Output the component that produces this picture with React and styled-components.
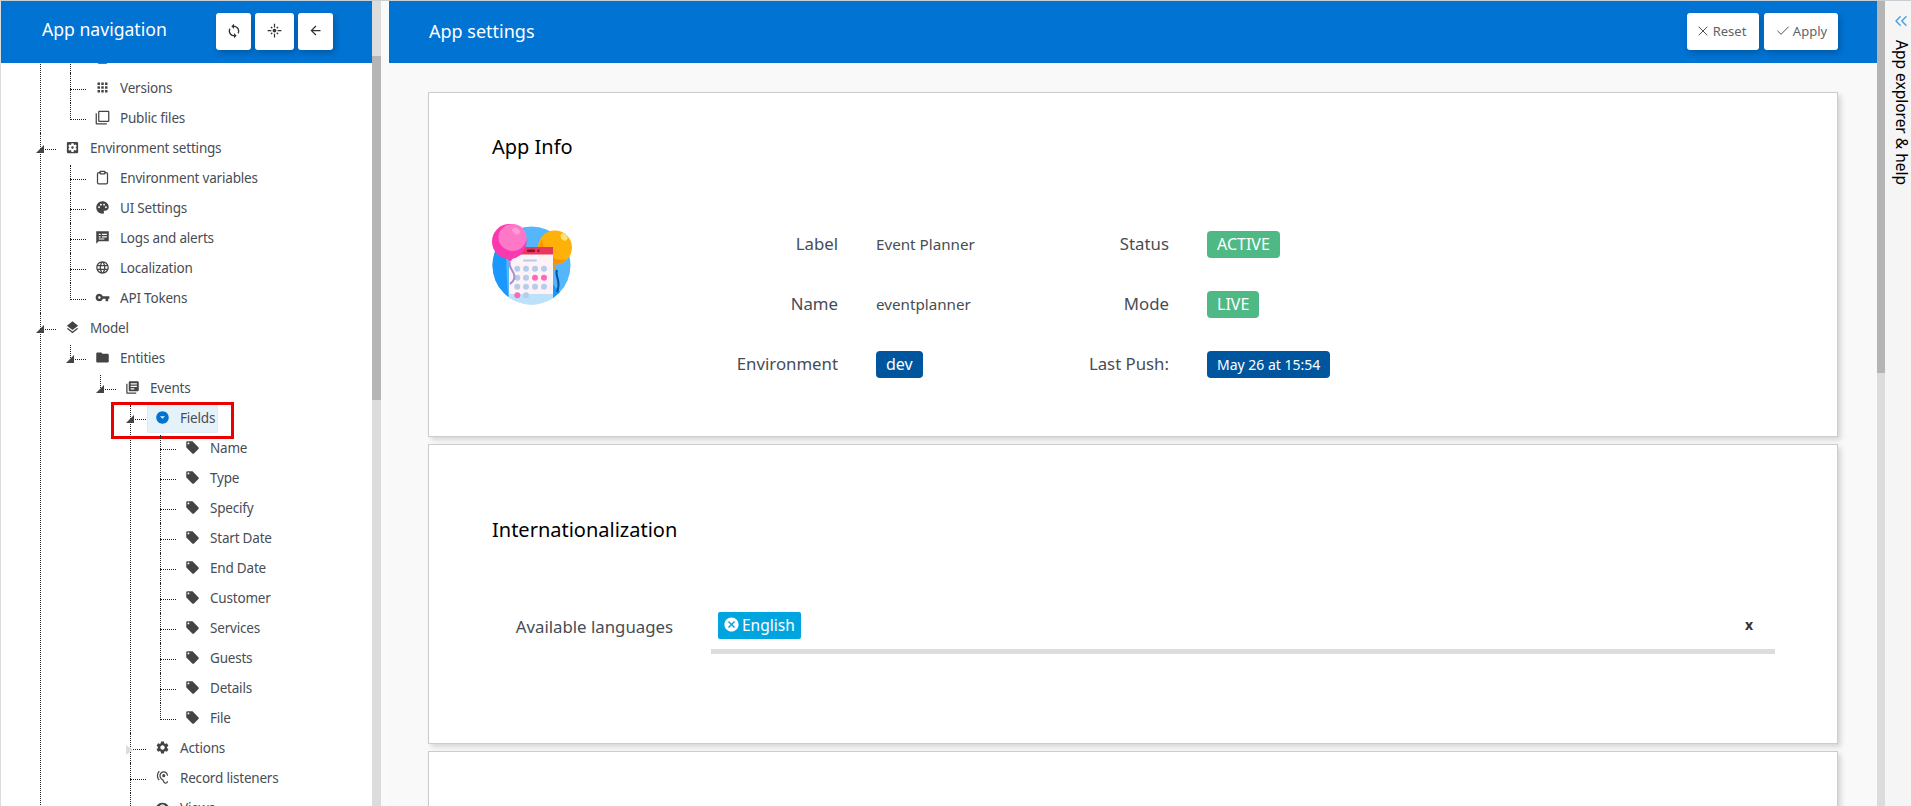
import React from 'react';
import styled, { createGlobalStyle } from 'styled-components';
import {
  MdApps, MdFilterNone, MdSettingsApplications, MdPalette,
  MdLanguage, MdVpnKey, MdLayers, MdFolder, MdLibraryBooks,
  MdArrowDropDownCircle, MdLocalOffer, MdSettings, MdHearing, MdVisibility,
  MdSync, MdFlare, MdArrowBack, MdOutlineDescription, MdCancel,
} from 'react-icons/md';
import { X, Check, ChevronsLeft, Clipboard } from 'lucide-react';

const Global = createGlobalStyle`
  html, body, #root { margin: 0; height: 100%; }
  body {
    font-family: "Noto Sans", "Open Sans", sans-serif;
    background: #fff;
    overflow: hidden;
  }
  * { box-sizing: border-box; }
`;

const AppFrame = styled.div`
  height: 806px;
  display: grid;
  grid-template-columns: 371px 9px 8px 1fr 8px 26px;
  border-top: 1px solid #c9ced3;
  border-left: 1px solid #dcdcdc;
  overflow: hidden;
`;

const Pane = styled.div`
  display: grid;
  grid-template-rows: 62px 1fr;
  min-height: 0;
  overflow: hidden;
  background: ${p => p.$bg || '#fff'};
`;

const PaneHeader = styled.header`
  background: #0073d3;
  color: #fff;
  display: flex;
  align-items: center;
  justify-content: space-between;
  padding: ${p => p.$pad};
`;

const NavTitle = styled.h2`
  margin: 0 0 6px;
  font-size: 17.6px;
  font-weight: 400;
`;

const MainTitle = styled.h2`
  margin: 0 0 2px;
  font-size: 18px;
  font-weight: 400;
`;

const ButtonRow = styled.div`
  display: flex;
  gap: ${p => p.$gap}px;
`;

const HeaderButton = styled.button`
  height: 37px;
  width: ${p => p.$w}px;
  margin-bottom: 1px;
  display: flex;
  align-items: center;
  justify-content: center;
  gap: 2px;
  padding: 0 ${p => p.$right || 0}px 2px 0;
  border: 0;
  border-radius: 3px;
  background: #fff;
  color: #5f6368;
  font: 400 13px "Noto Sans", sans-serif;
  box-shadow: 2px 3px 6px rgba(0, 0, 0, 0.22);
  svg { color: #333; }
`;

const TreeScroll = styled.div`
  overflow: hidden;
  min-height: 0;
`;

const TreeRoot = styled.ul`
  list-style: none;
  margin: -20px 0 0;
  padding: 0 0 0 39px;
`;

const TreeList = styled.ul`
  list-style: none;
  margin: 0 0 0 30px;
  padding: 0;
`;

const TreeItem = styled.li`
  position: relative;
  &::before {
    content: '';
    position: absolute;
    left: 0;
    top: ${p => (p.$first ? 2 : 0)}px;
    height: ${p => (p.$last ? '15px' : 'auto')};
    bottom: ${p => (p.$last ? 'auto' : 0)};
    border-left: 1px dotted #222;
  }
`;

const TreeRow = styled.div`
  position: relative;
  height: 30px;
  display: flex;
  align-items: center;
  &::before {
    content: '';
    width: 16px;
    flex: none;
    margin-top: 2px;
    border-top: 1px dotted #222;
  }
`;

const Toggle = styled.span`
  position: absolute;
  left: -4px;
  top: 12px;
  width: 0;
  height: 0;
  border-style: solid;
  border-width: ${p => (p.$open ? '0 0 8px 8px' : '5px 0 5px 7px')};
  border-color: ${p => (p.$open ? 'transparent transparent #444 transparent' : 'transparent transparent transparent #ddd')};
`;

const NodeBox = styled.div`
  display: flex;
  align-items: center;
  height: 29px;
  margin-left: 1px;
  padding: 0 3px 1px 8px;
  gap: 10px;
  color: #474d54;
  font-size: 13.5px;
  letter-spacing: -0.2px;
  white-space: nowrap;
  border-radius: 2px;
  background: ${p => (p.$active ? '#e6f2f9' : 'transparent')};
  box-shadow: ${p => (p.$active ? 'inset 0 0 0 1px #dcebf4' : 'none')};
  svg { color: ${p => (p.$active ? '#0073d3' : '#444')}; flex: none; }
`;

const RedMark = styled.span`
  position: absolute;
  left: -19px;
  top: -1px;
  width: 123px;
  height: 37px;
  border: 3px solid #ea0000;
  pointer-events: none;
`;

const Scrollbar = styled.div`
  background: #dcdcdc;
  display: flex;
  flex-direction: column;
`;

const ScrollThumb = styled.div`
  margin-top: ${p => p.$top}px;
  height: ${p => p.$h}px;
  background: #b5b5b5;
`;

const Gutter = styled.div`
  background: #fafafa;
`;

const Content = styled.div`
  padding: 29px 39px 0 39px;
  display: flex;
  flex-direction: column;
  gap: 7px;
  overflow: hidden;
  min-height: 0;
`;

const Card = styled.section`
  background: #fff;
  border: 1px solid #ccc;
  box-shadow: 3px 3px 5px rgba(0, 0, 0, 0.14);
  flex: none;
  height: ${p => p.$h}px;
  padding: ${p => p.$pad};
`;

const CardTitle = styled.h3`
  margin: 0;
  font-size: 20px;
  line-height: 26px;
  font-weight: 400;
  color: #000;
`;

const InfoBody = styled.div`
  display: grid;
  grid-template-columns: 80px 1fr;
  margin-top: 64px;
`;

const InfoGrid = styled.dl`
  margin: -10px 0 0;
  display: grid;
  grid-template-columns: 435px 1fr;
  grid-template-rows: repeat(3, 60px);
  align-items: center;
`;

const InfoPair = styled.div`
  display: grid;
  grid-template-columns: ${p => p.$label}px auto;
  column-gap: 38px;
  align-items: center;
  justify-content: start;
`;

const InfoLabel = styled.dt`
  text-align: right;
  font-size: 16.8px;
  color: #474d54;
  padding-bottom: 2px;
`;

const InfoValue = styled.dd`
  margin: 0;
  font-size: 15.2px;
  color: #474d54;
`;

const Tag = styled.span`
  display: inline-flex;
  align-items: center;
  height: 27px;
  padding: 0 10px;
  border-radius: 4px;
  background: ${p => p.$bg};
  color: #fff;
  font-size: ${p => p.$size || 16}px;
`;

const LangRow = styled.div`
  display: grid;
  grid-template-columns: 181px 1064px;
  column-gap: 38px;
  margin-top: 69px;
  align-items: start;
`;

const LangLabel = styled.label`
  text-align: right;
  font-size: 16.8px;
  color: #474d54;
  padding-top: 3px;
`;

const LangInput = styled.div`
  height: 42px;
  border-bottom: 5px solid #ddd;
  display: flex;
  align-items: flex-start;
  justify-content: space-between;
  padding: 0 22px 0 7px;
`;

const LangChip = styled.span`
  display: inline-flex;
  align-items: center;
  height: 27px;
  gap: 2px;
  padding: 0 6px 2px 5px;
  border-radius: 2px;
  background: #00a5e0;
  color: #fff;
  font-size: 15.5px;
`;

const ClearX = styled.span`
  font-size: 14px;
  font-weight: 700;
  color: #333;
  line-height: 26px;
`;

const SidePanel = styled.aside`
  background: #f5f5f5;
  display: flex;
  flex-direction: column;
  align-items: center;
  padding-top: 10px;
  color: #000;
  overflow: hidden;
`;

const SideLabel = styled.span`
  writing-mode: vertical-rl;
  font-size: 15.5px;
  line-height: 18px;
  margin-top: 9px;
  margin-right: 0;
  align-self: flex-end;
  white-space: nowrap;
`;

const ChevronWrap = styled.span`
  display: flex;
  margin-left: 6px;
  color: #4aa3e8;
`;

function LogsIcon({ size }) {
  return (
    <svg width={size} height={size} viewBox="0 0 24 24" fill="currentColor">
      <path
        fillRule="evenodd"
        d="M2 2h20v16H6l-4 4zM6 6v2h3V6zm0 4v2h3v-2zm5-4v2h8V6zm0 4v2h8v-2zm-5 3.5v1.5h9v-1.5z"
      />
    </svg>
  );
}

function ClipboardIcon({ size }) {
  return <Clipboard size={size} strokeWidth={2} />;
}

const tags = ['Name', 'Type', 'Specify', 'Start Date', 'End Date', 'Customer', 'Services', 'Guests', 'Details', 'File'];

const tree = [
  {
    label: 'App settings', icon: MdSettings, open: true, hideBox: true,
    children: [
      { label: 'Scheduled tasks', icon: MdOutlineDescription },
      { label: 'Versions', icon: MdApps },
      { label: 'Public files', icon: MdFilterNone },
    ],
  },
  {
    label: 'Environment settings', icon: MdSettingsApplications, open: true,
    children: [
      { label: 'Environment variables', icon: ClipboardIcon },
      { label: 'UI Settings', icon: MdPalette },
      { label: 'Logs and alerts', icon: LogsIcon },
      { label: 'Localization', icon: MdLanguage },
      { label: 'API Tokens', icon: MdVpnKey },
    ],
  },
  {
    label: 'Model', icon: MdLayers, open: true,
    children: [
      {
        label: 'Entities', icon: MdFolder, open: true,
        children: [
          {
            label: 'Events', icon: MdLibraryBooks, open: true,
            children: [
              {
                label: 'Fields', icon: MdArrowDropDownCircle, open: true, active: true,
                children: tags.map(label => ({ label, icon: MdLocalOffer })),
              },
              { label: 'Actions', icon: MdSettings, closed: true },
              { label: 'Record listeners', icon: MdHearing },
              { label: 'Views', icon: MdVisibility },
            ],
          },
        ],
      },
    ],
  },
];

function TreeNode({ node, first, last }) {
  const Icon = node.icon;
  return (
    <TreeItem $first={first} $last={last}>
      <TreeRow>
        {node.open && <Toggle $open />}
        {node.closed && <Toggle />}
        <NodeBox $active={node.active}>
          <Icon size={15} />
          <span>{node.label}</span>
        </NodeBox>
        {node.active && <RedMark />}
      </TreeRow>
      {node.children && (
        <TreeList>
          {node.children.map((child, i) => (
            <TreeNode
              key={child.label}
              node={child}
              first={i === 0}
              last={i === node.children.length - 1}
            />
          ))}
        </TreeList>
      )}
    </TreeItem>
  );
}

function EventIcon() {
  return (
    <svg width="80" height="81" viewBox="0 0 80 81">
      <defs>
        <clipPath id="disc"><circle cx="39.5" cy="41.5" r="39" /></clipPath>
      </defs>
      <circle cx="39.5" cy="41.5" r="39" fill="#55b6fb" />
      <g clipPath="url(#disc)">
        <path d="M16 0c-3 20-2 50 1 81H0V0z" fill="#1a98fb" />
        <path d="M61 60c4 6 8 10 19 12v9H61z" fill="#1a98fb" />
      </g>
      <circle cx="63" cy="23.5" r="17" fill="#ffb10a" />
      <path d="M52 36c-6-5-6-14-2-21 0 10 8 22 24 21-6 5-15 7-22 0z" fill="#ff9100" />
      <path d="M62 41l-3 3 5 2z" fill="#ff9100" />
      <ellipse cx="72" cy="13" rx="3" ry="4" fill="#ffe27a" transform="rotate(-35 72 13)" />
      <path d="M65 46c-3 6 5 10 0 22" stroke="#00569e" strokeWidth="2" fill="none" />
      <path d="M17 23h44v58H17z" fill="#fdf3f6" clipPath="url(#disc)" />
      <path d="M17 70h44v11H17z" fill="#bde0fb" clipPath="url(#disc)" />
      <path d="M24 23h37v7.5H17z" fill="#e8385c" />
      <rect x="35" y="25.5" width="8" height="2.5" rx="1" fill="#8a1230" />
      <circle cx="46.5" cy="26.7" r="1.2" fill="#8a1230" />
      <rect x="31" y="35.5" width="14" height="2" rx="1" fill="#b5cdea" />
      {[44.7, 53.7, 62.7, 71.3].map((y, r) =>
        [25.3, 34, 43, 52].map((x, c) => {
          if (r === 3 && c > 1) return null;
          const pink = (r === 1 && c > 1) || (r === 3 && c === 0);
          return <circle key={x + '-' + y} cx={x} cy={y} r="3" fill={pink ? '#fb69bd' : '#b5cdea'} />;
        }),
      )}
      <ellipse cx="17.3" cy="17.5" rx="17.3" ry="17.5" fill="#fb39ae" />
      <ellipse cx="20.5" cy="13.5" rx="14" ry="13.5" fill="#ff78c8" />
      <ellipse cx="24" cy="7" rx="4" ry="3" fill="#ff9ad6" transform="rotate(35 24 7)" />
      <path d="M14 33l4 5 4-5z" fill="#fb39ae" />
      <path d="M18 38c-3 6 7 10 4 17-1 3-3 4-4 5" stroke="#a68cc8" strokeWidth="2" fill="none" />
    </svg>
  );
}

export default function App() {
  return (
    <AppFrame>
      <Global />
      <Pane>
        <PaneHeader $pad="0 39px 0 41px">
          <NavTitle>App navigation</NavTitle>
          <ButtonRow $gap={4}>
            <HeaderButton $w={35}><MdSync size={16} /></HeaderButton>
            <HeaderButton $w={39}><MdFlare size={15} /></HeaderButton>
            <HeaderButton $w={35}><MdArrowBack size={15} /></HeaderButton>
          </ButtonRow>
        </PaneHeader>
        <TreeScroll>
          <TreeRoot>
            {tree.map(node => (
              node.hideBox ? (
                <TreeItem key={node.label}>
                  <TreeList>
                    {node.children.map((child, i) => (
                      <TreeNode key={child.label} node={child} last={i === node.children.length - 1} />
                    ))}
                  </TreeList>
                </TreeItem>
              ) : (
                <TreeNode key={node.label} node={node} />
              )
            ))}
          </TreeRoot>
        </TreeScroll>
      </Pane>
      <Scrollbar><ScrollThumb $top={55} $h={344} /></Scrollbar>
      <Gutter />
      <Pane $bg="#f9f9f9">
        <PaneHeader $pad="0 39px 0 40px">
          <MainTitle>App settings</MainTitle>
          <ButtonRow $gap={5}>
            <HeaderButton $w={72} $right={5}><X size={16} strokeWidth={1.3} />Reset</HeaderButton>
            <HeaderButton $w={74}><Check size={16} strokeWidth={1.3} />Apply</HeaderButton>
          </ButtonRow>
        </PaneHeader>
        <Content>
          <Card $h={345} $pad="41px 63px">
            <CardTitle>App Info</CardTitle>
            <InfoBody>
              <EventIcon />
              <InfoGrid>
                <InfoPair $label={266}>
                  <InfoLabel>Label</InfoLabel>
                  <InfoValue>Event Planner</InfoValue>
                </InfoPair>
                <InfoPair $label={162}>
                  <InfoLabel>Status</InfoLabel>
                  <InfoValue><Tag $bg="#4fb986">ACTIVE</Tag></InfoValue>
                </InfoPair>
                <InfoPair $label={266}>
                  <InfoLabel>Name</InfoLabel>
                  <InfoValue>eventplanner</InfoValue>
                </InfoPair>
                <InfoPair $label={162}>
                  <InfoLabel>Mode</InfoLabel>
                  <InfoValue><Tag $bg="#4fb986">LIVE</Tag></InfoValue>
                </InfoPair>
                <InfoPair $label={266}>
                  <InfoLabel>Environment</InfoLabel>
                  <InfoValue><Tag $bg="#00569e">dev</Tag></InfoValue>
                </InfoPair>
                <InfoPair $label={162}>
                  <InfoLabel>Last Push:</InfoLabel>
                  <InfoValue><Tag $bg="#00569e" $size={14}>May 26 at 15:54</Tag></InfoValue>
                </InfoPair>
              </InfoGrid>
            </InfoBody>
          </Card>
          <Card $h={300} $pad="72px 63px 0">
            <CardTitle>Internationalization</CardTitle>
            <LangRow>
              <LangLabel>Available languages</LangLabel>
              <LangInput>
                <LangChip><MdCancel size={17} />English</LangChip>
                <ClearX>x</ClearX>
              </LangInput>
            </LangRow>
          </Card>
          <Card $h={120} />
        </Content>
      </Pane>
      <Scrollbar><ScrollThumb $top={0} $h={372} /></Scrollbar>
      <SidePanel>
        <ChevronWrap><ChevronsLeft size={20} strokeWidth={1.8} /></ChevronWrap>
        <SideLabel>App explorer &amp; help</SideLabel>
      </SidePanel>
    </AppFrame>
  );
}
